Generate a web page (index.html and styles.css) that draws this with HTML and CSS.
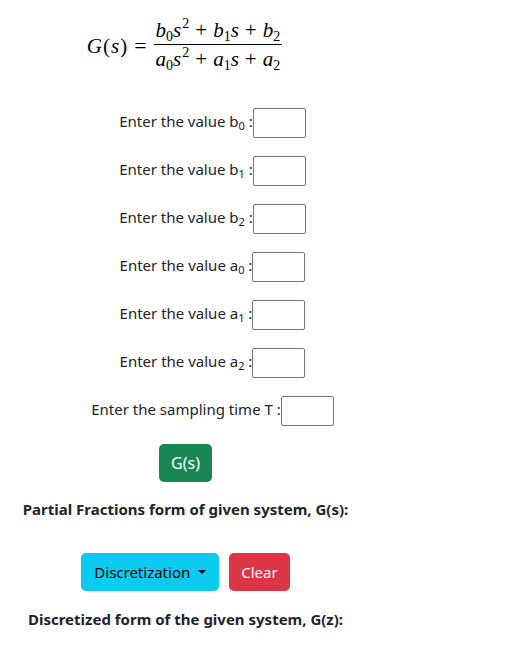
FILE: index.html
```html
<!DOCTYPE html>
<html>
<head>
<meta charset="utf-8">
<link rel="stylesheet" href="styles.css">
</head>
<body>
<div class="page">
  <div class="equation">
    <span class="lhs"><i>G</i>(<i>s</i>)</span>
    <span class="eq">=</span>
    <span class="frac">
      <span class="num"><i>b</i><sub>0</sub><i>s</i><sup>2</sup><span class="op">+</span><i>b</i><sub>1</sub><i>s</i><span class="op">+</span><i>b</i><sub>2</sub></span>
      <span class="den"><i>a</i><sub>0</sub><i>s</i><sup>2</sup><span class="op">+</span><i>a</i><sub>1</sub><i>s</i><span class="op">+</span><i>a</i><sub>2</sub></span>
    </span>
  </div>

  <div class="form">
    <div class="row"><label>Enter the value b<sub>0</sub> :</label><input type="text" class="box"></div>
    <div class="row"><label>Enter the value b<sub>1</sub> :</label><input type="text" class="box"></div>
    <div class="row"><label>Enter the value b<sub>2</sub> :</label><input type="text" class="box"></div>
    <div class="row"><label>Enter the value a<sub>0</sub> :</label><input type="text" class="box"></div>
    <div class="row"><label>Enter the value a<sub>1</sub> :</label><input type="text" class="box"></div>
    <div class="row"><label>Enter the value a<sub>2</sub> :</label><input type="text" class="box"></div>
    <div class="row"><label>Enter the sampling time T :</label><input type="text" class="box"></div>
  </div>

  <div class="center">
    <button class="btn btn-success">G(s)</button>
  </div>

  <h2 class="heading heading-1">Partial Fractions form of given system, G(s):</h2>

  <div class="center actions">
    <button class="btn btn-info">Discretization <span class="caret"></span></button>
    <button class="btn btn-danger">Clear</button>
  </div>

  <h2 class="heading heading-2">Discretized form of the given system, G(z):</h2>
</div>
</body>
</html>
```

FILE: styles.css
```css
html, body {
  margin: 0;
  padding: 0;
  background: #fff;
}
body {
  font-family: "Noto Sans", "Open Sans", sans-serif;
  font-size: 15px;
  color: #212529;
}
.page {
  width: 371px;
  padding-top: 16px;
}

/* equation */
.equation {
  display: flex;
  align-items: center;
  justify-content: center;
  font-family: "Liberation Serif", serif;
  font-size: 21px;
  color: #000;
  height: 58px;
  padding-right: 2px;
}
.equation i { font-style: italic; }
.lhs { margin-right: 6px; letter-spacing: 1px; margin-top: 2px; }
.eq { margin-right: 7px; font-size: 22px; margin-top: 2px; }
.frac {
  display: inline-flex;
  flex-direction: column;
  align-items: center;
}
.num, .den {
  display: block;
  padding: 0 2px;
  line-height: 28px;
  white-space: nowrap;
}
.num { border-bottom: 1.3px solid #000; }
.den { line-height: 29px; }
.frac sub, .frac sup {
  font-size: 14px;
  font-style: normal;
  line-height: 0;
}
.frac sub { vertical-align: -4px; }
.frac sup { vertical-align: 9px; margin-left: 1px; }
.op { margin: 0 6px; }

/* form */
.form {
  margin-top: 34px;
  padding-left: 54px;
}
.row {
  display: flex;
  justify-content: center;
  align-items: center;
  height: 30px;
  margin-bottom: 18px;
}
.row label {
  white-space: nowrap;
  padding-bottom: 5px;
}
.row label sub {
  font-size: 11px;
  line-height: 0;
  vertical-align: -3px;
}
.box {
  width: 53px;
  height: 30px;
  box-sizing: border-box;
  border: 1px solid #767676;
  border-radius: 2px;
  margin: 0;
  padding: 0;
  background: #fff;
}

.center {
  display: flex;
  justify-content: center;
  gap: 10px;
}
.btn {
  font-family: "Noto Sans", "Open Sans", sans-serif;
  font-size: 15px;
  height: 38px;
  padding: 0 12px;
  border: none;
  border-radius: 5px;
  cursor: pointer;
  display: inline-flex;
  align-items: center;
}
.btn-success { background: #198754; color: #fff; padding: 0 12px; font-size: 16px; }
.btn-info { background: #0dcaf0; color: #000; padding: 0 13px; }
.btn-danger { background: #dc3545; color: #fff; padding: 0 12px; }
.caret {
  display: inline-block;
  width: 0;
  height: 0;
  margin-left: 8px;
  border-left: 4px solid transparent;
  border-right: 4px solid transparent;
  border-top: 4px solid #000;
}

.heading {
  font-size: 15px;
  font-weight: 700;
  text-align: center;
  margin: 0;
  line-height: 20px;
}
.heading-1 { margin-top: 17px; }
.actions { margin-top: 34px; }
.heading-2 { margin-top: 18px; }
```
